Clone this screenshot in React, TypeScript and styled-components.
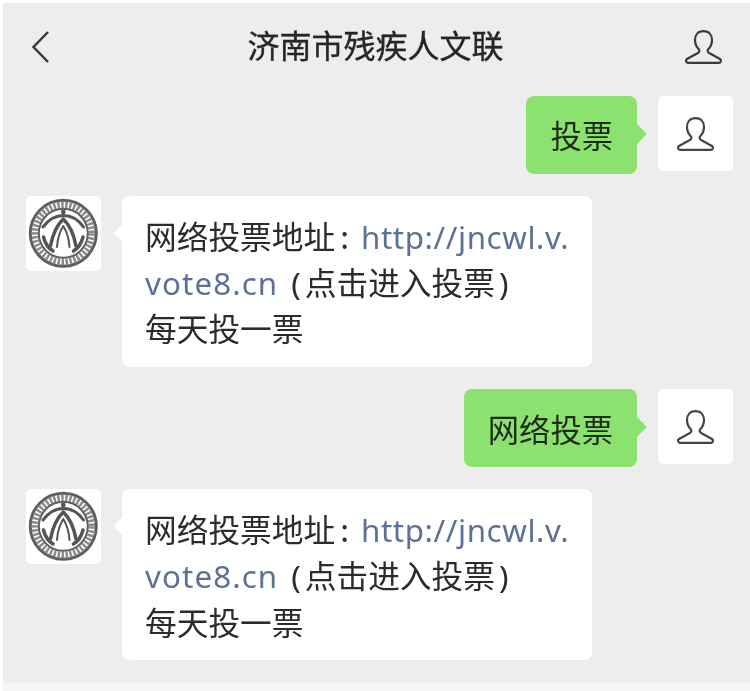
import React from "react";
import styled, { createGlobalStyle } from "styled-components";

const Global = createGlobalStyle`
  html, body { margin: 0; padding: 0; background: #fff; }
  body { font-family: "Noto Sans CJK SC", "Noto Sans", sans-serif; }
`;

const Screen = styled.div`
  width: 747px;
  height: 688px;
  margin: 3px 0 0 3px;
  display: flex;
  flex-direction: column;
  background: #f5f5f5;
  overflow: hidden;
  filter: blur(0.45px);
`;

const Panel = styled.div`
  height: 680px;
  background: #ededed;
  display: flex;
  flex-direction: column;
`;

const Header = styled.header`
  height: 93px;
  box-sizing: border-box;
  padding: 0 28px 6px 29px;
  display: grid;
  grid-template-columns: 1fr auto 1fr;
  align-items: center;
`;

const Title = styled.h1`
  margin: 0 0 6px -3px;
  font-size: 32px;
  line-height: 44px;
  font-weight: 400;
  color: #262626;
  -webkit-text-stroke: 0.35px #262626;
`;

const HeaderRight = styled.div`
  display: flex;
  justify-content: flex-end;
`;

const HeaderLeft = styled.div`
  display: flex;
`;

const Chat = styled.main`
  display: flex;
  flex-direction: column;
  gap: 22.4px;
  padding: 0 17px 0 23px;
`;

const Row = styled.div<{ $mine?: boolean }>`
  display: flex;
  align-items: flex-start;
  justify-content: ${(p) => (p.$mine ? "flex-end" : "flex-start")};
  gap: 21px;
`;

const Avatar = styled.div`
  width: 75px;
  height: 75px;
  flex: none;
  background: #fff;
  border-radius: 5px;
  display: flex;
  align-items: center;
  justify-content: center;
`;

const SentBubble = styled.div`
  position: relative;
  height: 77.5px;
  box-sizing: border-box;
  padding: 0 24px;
  display: flex;
  align-items: center;
  background: #8ce26e;
  border-radius: 8px;
  font-size: 31.3px;
  color: #1f2a1b;
  &::after {
    content: "";
    position: absolute;
    right: -7px;
    top: 31px;
    width: 14px;
    height: 14px;
    background: #8ce26e;
    transform: rotate(45deg);
  }
`;

const ReceivedBubble = styled.div`
  position: relative;
  width: 470px;
  height: 171px;
  box-sizing: border-box;
  padding: 16px 0 0 23px;
  background: #fff;
  border-radius: 8px;
  font-size: 31.7px;
  line-height: 46.2px;
  color: #2b2b2b;
  &::after {
    content: "";
    position: absolute;
    left: -6px;
    top: 31px;
    width: 12px;
    height: 12px;
    background: #fff;
    transform: rotate(45deg);
  }
`;

const Line = styled.div`
  white-space: nowrap;
  height: 46.2px;
`;

const Link = styled.span<{ $wide?: boolean }>`
  color: #5d7196;
  font-family: "Noto Sans", sans-serif;
  font-size: 31.3px;
  letter-spacing: ${(p) => (p.$wide ? "1.1px" : "0.6px")};
`;

const Colon = styled.span`
  margin: 0 12px 0 5px;
`;

const Paren = styled.span<{ $open?: boolean }>`
  font-family: "Noto Sans", sans-serif;
  margin: ${(p) => (p.$open ? "0 4px 0 13px" : "0 0 0 4px")};
`;

const Person = ({ color = "#3a3a3a" }: { color?: string }) => (
  <svg width={37} height={34} viewBox="0 0 37 34" fill="none" stroke={color} strokeWidth={2.2} strokeLinejoin="round">
    <path d="M18.500 1.200C13 1.200 10 5 10 10c0 4 1.500 7 4 9.500 .8 1.500 0 3-2 4L2 29C.5 30 .8 32.800 3 32.800h31c2.200 0 2.500-2.800 1-3.800L25 23.500c-2-1-2.800-2.500-2-4 2.500-2.500 4-5.500 4-9.500 0-5-3-8.800-8.500-8.800Z" />
  </svg>
);

const Emblem = () => (
  <svg width="75" height="75" viewBox="0 0 75 75">
    <circle cx="37.300" cy="37.300" r="33" fill="none" stroke="#5f5f5f" strokeWidth="3" />
    <circle cx="37.300" cy="37.300" r="28.500" fill="none" stroke="#8c8c8c" strokeWidth="6.500" strokeDasharray="2.500 1.500" />
    <circle cx="37.300" cy="37.300" r="24.500" fill="#fff" stroke="#5f5f5f" strokeWidth="2" />
    <g fill="none" stroke="#555" strokeLinecap="round">
      <circle cx="37.300" cy="16" r="2.400" fill="#555" stroke="none" />
      <path d="M17 31C23 23 30 19.500 37.300 19.500S52 23 57.500 31" strokeWidth="3" />
      <path d="M37.300 23C31 29 26.500 39 24.500 50M37.300 23C43.500 29 48 39 50 50" strokeWidth="3.500" />
      <path d="M37.300 30C33.500 36 31.500 43 31 51M37.300 30C41 36 43 43 43.500 51" strokeWidth="2" />
      <path d="M17.500 41C19 47 22 52 27 55M57 41C55.500 47 52.500 52 47.500 55" strokeWidth="3.500" />
    </g>
  </svg>
);

const Notice = () => (
  <Row>
    <Avatar><Emblem /></Avatar>
    <ReceivedBubble>
      <Line>网络投票地址<Colon>:</Colon><Link>http://jncwl.v.</Link></Line>
      <Line><Link $wide>vote8.cn</Link><Paren $open>(</Paren>点击进入投票<Paren>)</Paren></Line>
      <Line>每天投一票</Line>
    </ReceivedBubble>
  </Row>
);

const Sent = ({ text }: { text: string }) => (
  <Row $mine>
    <SentBubble>{text}</SentBubble>
    <Avatar><Person color="#444" /></Avatar>
  </Row>
);

export default function App() {
  return (
    <>
      <Global />
      <Screen>
        <Panel>
          <Header>
            <HeaderLeft>
              <svg width="17" height="32" viewBox="0 0 17 32" fill="none" stroke="#3a3a3a" strokeWidth="2.500">
                <path d="M16 1L1.500 16L16 31" />
              </svg>
            </HeaderLeft>
            <Title>济南市残疾人文联</Title>
            <HeaderRight><Person /></HeaderRight>
          </Header>
          <Chat>
            <Sent text="投票" />
            <Notice />
            <Sent text="网络投票" />
            <Notice />
          </Chat>
        </Panel>
      </Screen>
    </>
  );
}
